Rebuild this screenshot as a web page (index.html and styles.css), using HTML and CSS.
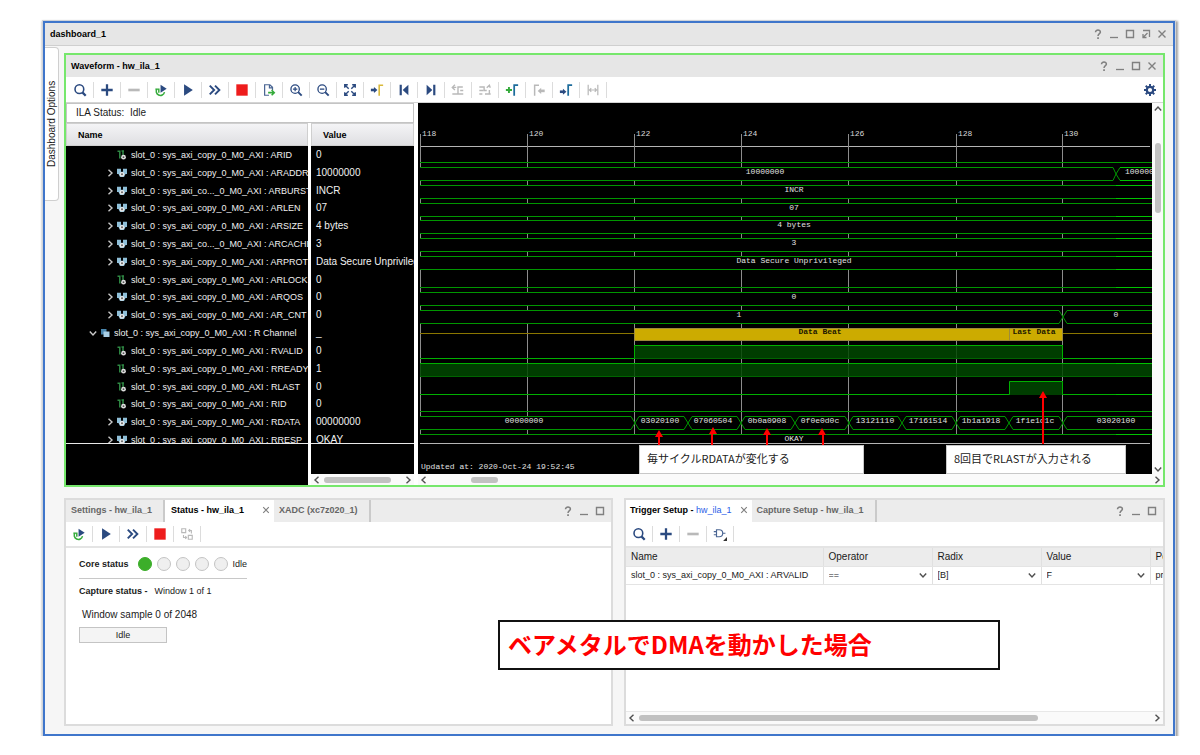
FILE: index.html
```html
<!DOCTYPE html>
<html lang="ja">
<head>
    <meta charset="UTF-8">
    <meta name="viewport" content="width=device-width, initial-scale=1.0">
    <title>dashboard_1</title>
    <link rel="stylesheet" href="styles.css">
</head>
<body>

<!-- shared icons -->
<svg class="sprite" aria-hidden="true">
    <symbol id="search" viewBox="0 0 16 16"><circle cx="7.3" cy="7" r="5" fill="none" stroke="#2b4a80" stroke-width="1.8"/><path d="M11 11l3.5 3.5" stroke="#2b4a80" stroke-width="2.6"/></symbol>
    <symbol id="plus" viewBox="0 0 16 16"><path d="M8 1.5v13M1.5 8h13" stroke="#2b4a80" stroke-width="2.6"/></symbol>
    <symbol id="minus" viewBox="0 0 16 16"><path d="M1.500 8h13" stroke="#b9b9b9" stroke-width="3"/></symbol>
    <symbol id="rerun" viewBox="0 0 16 16"><path d="M3.500 6.500A4.800 4.800 0 1 0 12 10.500M1.500 7h4v4" fill="none" stroke="#35ab3b" stroke-width="1.700"/><path d="M7.500 2l7 4.500-7 4.500z" fill="#2b4a80"/></symbol>
    <symbol id="play" viewBox="0 0 16 16"><path d="M3.500 1.500l10 6.500-10 6.500z" fill="#2b4a80"/></symbol>
    <symbol id="fast" viewBox="0 0 16 16"><path d="M2 3L7 8 2 13M8 3L13 8 8 13" fill="none" stroke="#2b4a80" stroke-width="2.200"/></symbol>
    <symbol id="stop" viewBox="0 0 16 16"><path d="M1.500 1.500h13v13h-13z" fill="#ee1c1c"/></symbol>
    <symbol id="export" viewBox="0 0 16 16"><path d="M8 14H3V2h6l3 3v3M8.500 2v3.500H12" fill="none" stroke="#4a6593" stroke-width="1.400"/><path d="M7 11h6.500M11 8l3 3-3 3" fill="none" stroke="#35ab3b" stroke-width="1.800"/></symbol>
    <symbol id="zoomin" viewBox="0 0 16 16"><circle cx="7" cy="7" r="4.800" fill="none" stroke="#2b4a80" stroke-width="1.500"/><path d="M4.500 7h5M7 4.500v5" stroke="#2b4a80" stroke-width="1.400"/><path d="M10.500 10.500l4 4" stroke="#2b4a80" stroke-width="2.200"/></symbol>
    <symbol id="zoomout" viewBox="0 0 16 16"><circle cx="7" cy="7" r="4.800" fill="none" stroke="#2b4a80" stroke-width="1.500"/><path d="M4.500 7h5" stroke="#2b4a80" stroke-width="1.500"/><path d="M10.500 10.500l4 4" stroke="#2b4a80" stroke-width="2.200"/></symbol>
    <symbol id="fit" viewBox="0 0 16 16"><path d="M2 5.500V2h3.500M10.500 2H14v3.500M14 10.500V14h-3.500M5.500 14H2v-3.500M2.500 2.500l4 4M13.500 2.500l-4 4M13.500 13.500l-4-4M2.500 13.500l4-4" fill="none" stroke="#2b4a80" stroke-width="1.600" stroke-dasharray="none"/></symbol>
    <symbol id="trig" viewBox="0 0 16 16"><path d="M1 8h4" stroke="#2b4a80" stroke-width="3"/><path d="M4.500 4.500L8.500 8l-4 3.500z" fill="#2b4a80"/><path d="M10.500 14.500V2.500H15" fill="none" stroke="#d9b93b" stroke-width="1.800"/></symbol>
    <symbol id="first" viewBox="0 0 16 16"><path d="M3 2h2.500v12H3zM13 2v12L6.500 8z" fill="#2b4a80"/></symbol>
    <symbol id="last" viewBox="0 0 16 16"><path d="M13 2h-2.500v12H13zM3 2v12l6.500-6z" fill="#2b4a80"/></symbol>
    <symbol id="prevedge" viewBox="0 0 16 16"><path d="M1.500 12.500H8V4.500h5.500M14 8.500h-3.500M14 12.500H8M4.500 2l-3 3 3 3M1.500 5H6" fill="none" stroke="#b9b9b9" stroke-width="1.600"/></symbol>
    <symbol id="nextedge" viewBox="0 0 16 16"><path d="M1.500 4.500H7v4h3M8.500 12.500h6M8 12.500h5V8M1.500 8.500H6M1.500 12.500H5M10 5.500l3-3 1 3" fill="none" stroke="#b9b9b9" stroke-width="1.600"/></symbol>
    <symbol id="addmark" viewBox="0 0 16 16"><path d="M4.500 4.500v7M1 8h7" stroke="#35ab3b" stroke-width="2.200"/><path d="M10.500 14.500V2.500H15" fill="none" stroke="#1d6c9c" stroke-width="2"/></symbol>
    <symbol id="prevmark" viewBox="0 0 16 16"><path d="M8 2.500H3v12" fill="none" stroke="#b9b9b9" stroke-width="1.700"/><path d="M10 9h4.500" stroke="#b9b9b9" stroke-width="3"/><path d="M10.500 5.500v7L6.500 9z" fill="#b9b9b9"/></symbol>
    <symbol id="nextmark" viewBox="0 0 16 16"><path d="M1 10h4" stroke="#2b4a80" stroke-width="3"/><path d="M4.500 6.500l4 3.500-4 3.500z" fill="#2b4a80"/><path d="M10.500 14.500V2.500H15" fill="none" stroke="#1d6c9c" stroke-width="2"/></symbol>
    <symbol id="swap" viewBox="0 0 16 16"><path d="M2.500 2v12M13.500 2v12M4 8h8M6 6L4 8l2 2M10 6l2 2-2 2" fill="none" stroke="#b9b9b9" stroke-width="1.400"/></symbol>
    <symbol id="gear" viewBox="0 0 16 16"><circle cx="8" cy="8" r="4.300" fill="none" stroke="#2b4a80" stroke-width="3"/><path d="M8 0v4M8 12v4M0 8h4M12 8h4M2.300 2.300l2.500 2.500M11.200 11.200l2.500 2.500M13.700 2.300l-2.500 2.500M4.800 11.200l-2.500 2.500" stroke="#2b4a80" stroke-width="2.600"/></symbol>
    <symbol id="blocks" viewBox="0 0 16 16"><path d="M2 2h4.500v4.500H2zM9.500 9.500H14V14H9.500zM10 4h3v3.500M11.500 2.500L10 4l1.500 1.500M7.500 12H4V9M6 10.500L7.500 12 6 13.500" fill="none" stroke="#b9b9b9" stroke-width="1.300"/></symbol>
    <symbol id="gate" viewBox="0 0 18 18"><path d="M4.500 3.500H8a4.500 4.500 0 0 1 0 9H4.500zM1 6h3.500M1 10h3.500M13 8h3" fill="none" stroke="#4a6593" stroke-width="1.500"/><path d="M18 13v5h-5z" fill="#333"/></symbol>
    <symbol id="help" viewBox="0 0 10 10"><path d="M2.500 3.200C2.500.2 7.600.4 7.400 3.100 7.300 4.700 5 4.600 5 7" fill="none" stroke="#808080" stroke-width="1.500"/><path d="M4.200 8.200h1.700v1.700H4.200z" fill="#808080"/></symbol>
    <symbol id="min" viewBox="0 0 10 10"><path d="M1 8.500h8" stroke="#808080" stroke-width="1.300"/></symbol>
    <symbol id="max" viewBox="0 0 10 10"><path d="M1.500 1.500h7v7h-7z" fill="none" stroke="#808080" stroke-width="1.400"/></symbol>
    <symbol id="float" viewBox="0 0 10 10"><path d="M2 1.500h6.500V8M6.500 4L2.500 8M2 5v3.500h3.500" fill="none" stroke="#808080" stroke-width="1.300"/></symbol>
    <symbol id="close" viewBox="0 0 10 10"><path d="M1.500 1.500l7 7M8.500 1.500l-7 7" stroke="#808080" stroke-width="1.400"/></symbol>
    <symbol id="right" viewBox="0 0 8 8"><path d="M2.500 .8L6 4 2.500 7.200" fill="none" stroke="currentColor" stroke-width="1.400"/></symbol>
    <symbol id="left" viewBox="0 0 8 8"><path d="M5.500 .8L2 4l3.500 3.200" fill="none" stroke="currentColor" stroke-width="1.400"/></symbol>
    <symbol id="down" viewBox="0 0 8 8"><path d="M.8 2.500L4 6l3.200-3.500" fill="none" stroke="currentColor" stroke-width="1.400"/></symbol>
    <symbol id="up" viewBox="0 0 8 8"><path d="M.8 5.500L4 2l3.200 3.500" fill="none" stroke="currentColor" stroke-width="1.400"/></symbol>
    <symbol id="bus" viewBox="0 0 10 10"><path d="M0 .8h4v3H6v-3h4V6H8.500L7 9H3L1.500 6H0z" fill="#8fbfd8"/><circle cx="5" cy="6.300" r="2.400" fill="#e8e8e8"/><circle cx="5" cy="6.300" r="1" fill="#666"/></symbol>
    <symbol id="wire" viewBox="0 0 10 10"><path d="M.5 1.200h2.300V8.500M6 .5V5M4.500 1H7" fill="none" stroke="#2f8a44" stroke-width="1.500"/><circle cx="6.500" cy="7.200" r="2.400" fill="#ddd"/><circle cx="6.500" cy="7.200" r=".9" fill="#555"/></symbol>
    <symbol id="group" viewBox="0 0 10 10"><path d="M1 1h5.500v5.500H1z" fill="#4a86ad"/><path d="M3.500 3.500H9.500V9h-6z" fill="#a9cfe6"/></symbol>
</svg>

<main class="window">
    <header class="titlebar">
        <h1>dashboard_1</h1>
        <div class="winbtns">
            <button aria-label="Help"><svg><use href="#help"/></svg></button>
            <button aria-label="Minimize"><svg><use href="#min"/></svg></button>
            <button aria-label="Maximize"><svg><use href="#max"/></svg></button>
            <button aria-label="Float"><svg><use href="#float"/></svg></button>
            <button aria-label="Close"><svg><use href="#close"/></svg></button>
        </div>
    </header>

    <div class="workspace">
        <button class="side-tab">Dashboard Options</button>

        <div class="panels">
            <section class="panel waveform">
                <header class="titlebar">
                    <h2>Waveform - hw_ila_1</h2>
                    <div class="winbtns">
                        <button aria-label="Help"><svg><use href="#help"/></svg></button>
                        <button aria-label="Minimize"><svg><use href="#min"/></svg></button>
                        <button aria-label="Maximize"><svg><use href="#max"/></svg></button>
                        <button aria-label="Close"><svg><use href="#close"/></svg></button>
                    </div>
                </header>
                <div class="toolbar">
                    <button aria-label="Search"><svg><use href="#search"/></svg></button>
                    <button aria-label="Add"><svg><use href="#plus"/></svg></button>
                    <button aria-label="Remove"><svg><use href="#minus"/></svg></button>
                    <button aria-label="Auto re-trigger"><svg><use href="#rerun"/></svg></button>
                    <button aria-label="Run trigger"><svg><use href="#play"/></svg></button>
                    <button aria-label="Run immediate"><svg><use href="#fast"/></svg></button>
                    <button aria-label="Stop"><svg><use href="#stop"/></svg></button>
                    <button aria-label="Export"><svg><use href="#export"/></svg></button>
                    <button aria-label="Zoom in"><svg><use href="#zoomin"/></svg></button>
                    <button aria-label="Zoom out"><svg><use href="#zoomout"/></svg></button>
                    <button aria-label="Zoom fit"><svg><use href="#fit"/></svg></button>
                    <button aria-label="Go to trigger"><svg><use href="#trig"/></svg></button>
                    <button aria-label="First"><svg><use href="#first"/></svg></button>
                    <button aria-label="Last"><svg><use href="#last"/></svg></button>
                    <button aria-label="Previous transition"><svg><use href="#prevedge"/></svg></button>
                    <button aria-label="Next transition"><svg><use href="#nextedge"/></svg></button>
                    <button aria-label="Add marker"><svg><use href="#addmark"/></svg></button>
                    <button aria-label="Previous marker"><svg><use href="#prevmark"/></svg></button>
                    <button aria-label="Next marker"><svg><use href="#nextmark"/></svg></button>
                    <button aria-label="Swap cursors"><svg><use href="#swap"/></svg></button>
                    <button class="settings" aria-label="Settings"><svg><use href="#gear"/></svg></button>
                </div>

                <div class="wave-main">
                    <div class="signals">
                        <div class="ila-status">ILA Status:&nbsp; Idle</div>
                        <div class="columns">
                            <div class="column">
                                <div class="col-head">Name</div>
                                <div class="clip"><ul class="rows names">
                                    <li><i></i><svg><use href="#wire"/></svg>slot_0 : sys_axi_copy_0_M0_AXI : ARID</li>
                                    <li><i><svg><use href="#right"/></svg></i><svg><use href="#bus"/></svg>slot_0 : sys_axi_copy_0_M0_AXI : ARADDR</li>
                                    <li><i><svg><use href="#right"/></svg></i><svg><use href="#bus"/></svg>slot_0 : sys_axi_co..._0_M0_AXI : ARBURST</li>
                                    <li><i><svg><use href="#right"/></svg></i><svg><use href="#bus"/></svg>slot_0 : sys_axi_copy_0_M0_AXI : ARLEN</li>
                                    <li><i><svg><use href="#right"/></svg></i><svg><use href="#bus"/></svg>slot_0 : sys_axi_copy_0_M0_AXI : ARSIZE</li>
                                    <li><i><svg><use href="#right"/></svg></i><svg><use href="#bus"/></svg>slot_0 : sys_axi_co..._0_M0_AXI : ARCACHE</li>
                                    <li><i><svg><use href="#right"/></svg></i><svg><use href="#bus"/></svg>slot_0 : sys_axi_copy_0_M0_AXI : ARPROT</li>
                                    <li><i></i><svg><use href="#wire"/></svg>slot_0 : sys_axi_copy_0_M0_AXI : ARLOCK</li>
                                    <li><i><svg><use href="#right"/></svg></i><svg><use href="#bus"/></svg>slot_0 : sys_axi_copy_0_M0_AXI : ARQOS</li>
                                    <li><i><svg><use href="#right"/></svg></i><svg><use href="#bus"/></svg>slot_0 : sys_axi_copy_0_M0_AXI : AR_CNT</li>
                                    <li class="group"><i><svg><use href="#down"/></svg></i><svg><use href="#group"/></svg>slot_0 : sys_axi_copy_0_M0_AXI : R Channel</li>
                                    <li><i></i><svg><use href="#wire"/></svg>slot_0 : sys_axi_copy_0_M0_AXI : RVALID</li>
                                    <li><i></i><svg><use href="#wire"/></svg>slot_0 : sys_axi_copy_0_M0_AXI : RREADY</li>
                                    <li><i></i><svg><use href="#wire"/></svg>slot_0 : sys_axi_copy_0_M0_AXI : RLAST</li>
                                    <li><i></i><svg><use href="#wire"/></svg>slot_0 : sys_axi_copy_0_M0_AXI : RID</li>
                                    <li><i><svg><use href="#right"/></svg></i><svg><use href="#bus"/></svg>slot_0 : sys_axi_copy_0_M0_AXI : RDATA</li>
                                    <li><i><svg><use href="#right"/></svg></i><svg><use href="#bus"/></svg>slot_0 : sys_axi_copy_0_M0_AXI : RRESP</li>
                                </ul></div>
                                <div class="below"></div>
                            </div>
                            <div class="column">
                                <div class="col-head">Value</div>
                                <div class="clip"><ul class="rows values">
                                    <li>0</li><li>10000000</li><li>INCR</li><li>07</li><li>4 bytes</li><li>3</li>
                                    <li>Data Secure Unprivileg</li><li>0</li><li>0</li><li>0</li><li>_</li>
                                    <li>0</li><li>1</li><li>0</li><li>0</li><li>00000000</li><li>OKAY</li>
                                </ul></div>
                                <div class="below"></div>
                                <div class="hscroll"><svg><use href="#left"/></svg><span class="track"><b class="thumb value-thumb"></b></span><svg><use href="#right"/></svg></div>
                            </div>
                        </div>
                    </div>

                    <div class="viewer">
                        <div class="view-row">
                            <div class="wave-view">
                                <svg class="wave" role="img" aria-label="Waveform">
                                    <!-- time ruler and grid -->
                                    <path class="ruler" d="M2 43.500H732"/>
                                    <path class="grid" d="M2.500 31V331M109.500 31V331M216.500 31V331M323.500 31V331M430.500 31V331M538.500 31V331M644.500 31V331"/>
                                    <g class="tick">
                                        <text x="4" y="33">118</text><text x="111" y="33">120</text><text x="218" y="33">122</text>
                                        <text x="325" y="33">124</text><text x="432" y="33">126</text><text x="540" y="33">128</text><text x="646" y="33">130</text>
                                    </g>
                                    <!-- AR channel -->
                                    <g class="busline">
                                        <path d="M2 59.500H2000"/>
                                        <path class="body" d="M2 64.500H695L698 71 695 77.500H2M2000 64.500H702L698 71 702 77.500H2000"/>
                                        <path class="body" d="M2 82.500H2000V95.500H2"/>
                                        <path class="body" d="M2 100.500H2000V113.500H2"/>
                                        <path class="body" d="M2 117.500H2000V130.500H2"/>
                                        <path class="body" d="M2 135.500H2000V148.500H2"/>
                                        <path class="body" d="M2 153.500H2000V166.500H2"/>
                                        <path d="M2 184.500H2000"/>
                                        <path class="body" d="M2 189.500H2000V202.500H2"/>
                                        <path class="body" d="M2 207.500H641L645 214 641 220.500H2M2000 207.500H649L645 214 649 220.500H2000"/>
                                    </g>
                                    <!-- R channel -->
                                    <path class="idle" d="M2 230.500H216M645 230.500H2000"/>
                                    <path class="beat" d="M216.500 225.500H591.500V237.500H216.500zM591.500 225.500H644.500V237.500H591.500z"/>
                                    <path class="high" d="M216 242H645V256H216zM2 260H2000V274H2zM591 278H645V292H591z"/>
                                    <path class="lowline" d="M2 273.500H2000M216 255.500H645"/>
                                    <g class="busline">
                                        <path class="edge" d="M2 255.500H216.500V242.500H644.500V255.500H2000M2 260.500H2000M2 291.500H591.500V278.500H644.500V291.500H2000"/>
                                        <path d="M2 308.500H2000"/>
                                        <path class="body" d="M2 313.500H213L217 320 213 326.500H2"/>
                                        <path class="body" d="M221 313.500H266L270 320 266 326.500H221L217 320zM274 313.500H319L323 320 319 326.500H274L270 320zM327 313.500H373L377 320 373 326.500H327L323 320zM381 313.500H427L431 320 427 326.500H381L377 320zM435 313.500H480L484 320 480 326.500H435L431 320zM488 313.500H534L538 320 534 326.500H488L484 320zM542 313.500H587L591 320 587 326.500H542L538 320zM595 313.500H641L645 320 641 326.500H595L591 320z"/>
                                        <path class="body" d="M2000 313.500H649L645 320 649 326.500H2000"/>
                                        <path d="M2 331.500H2000"/>
                                        <path class="bright" d="M702 64.500H2000M702 77.500H2000M698 82.500H2000M698 95.500H2000M698 113.500H2000M698 135.500H2000M698 153.500H2000M698 166.500H2000M698 184.500H2000M698 260.500H2000M698 291.500H2000M698 331.500H2000"/>
                                    </g>
                                    <path class="ruler" d="M2 340.500H732"/>
                                    <g class="label">
                                        <text x="347" y="71">10000000</text><text class="start" x="707" y="71">100000</text>
                                        <text x="376" y="89">INCR</text><text x="376" y="107">07</text><text x="376" y="124">4 bytes</text>
                                        <text x="376" y="142">3</text><text x="376" y="160">Data Secure Unprivileged</text><text x="376" y="196">0</text>
                                        <text x="321" y="214">1</text><text x="698" y="214">0</text>
                                        <text class="dark" x="402" y="231">Data Beat</text><text class="dark" x="616" y="231">Last Data</text>
                                        <text x="106" y="320">00000000</text><text x="242" y="320">03020100</text><text x="295" y="320">07060504</text>
                                        <text x="349" y="320">0b0a0908</text><text x="402" y="320">0f0e0d0c</text><text x="457" y="320">13121110</text>
                                        <text x="510" y="320">17161514</text><text x="563" y="320">1b1a1918</text><text x="617" y="320">1f1e1d1c</text>
                                        <text x="698" y="320">03020100</text><text x="376" y="338">OKAY</text>
                                        <text class="start" x="3" y="366">Updated at: 2020-Oct-24 19:52:45</text>
                                    </g>
                                    <!-- arrows from the notes -->
                                    <path class="arrow" d="M241 343V332M294 343V330M349 343V331M405 343V331M625 341V293"/>
                                    <path class="arrowhead" d="M241 327l4 7h-8zM295 324l4 7h-8zM349 325l4 7h-8zM404 325l4 7h-8zM625 288l4 7h-8z"/>
                                </svg>
                                <p class="note note-data">毎サイクルRDATAが変化する</p>
                                <p class="note note-last">8回目でRLASTが入力される</p>
                            </div>
                            <div class="vscroll"><svg><use href="#up"/></svg><span class="track"><b class="thumb"></b></span><svg><use href="#down"/></svg></div>
                        </div>
                        <div class="hscroll"><svg><use href="#left"/></svg><span class="track"><b class="thumb wave-thumb"></b></span><svg><use href="#right"/></svg></div>
                    </div>
                </div>
            </section>

            <div class="lower">
                <section class="panel status">
                    <header class="tabs">
                        <button class="tab">Settings - hw_ila_1</button>
                        <button class="tab active">Status - hw_ila_1<svg><use href="#close"/></svg></button>
                        <button class="tab">XADC (xc7z020_1)</button>
                        <div class="winbtns">
                            <button aria-label="Help"><svg><use href="#help"/></svg></button>
                            <button aria-label="Minimize"><svg><use href="#min"/></svg></button>
                            <button aria-label="Maximize"><svg><use href="#max"/></svg></button>
                        </div>
                    </header>
                    <div class="toolbar">
                        <button aria-label="Auto re-trigger"><svg><use href="#rerun"/></svg></button>
                        <button aria-label="Run trigger"><svg><use href="#play"/></svg></button>
                        <button aria-label="Run immediate"><svg><use href="#fast"/></svg></button>
                        <button aria-label="Stop"><svg><use href="#stop"/></svg></button>
                        <button aria-label="Toggle"><svg><use href="#blocks"/></svg></button>
                    </div>
                    <div class="status-body">
                        <div class="core"><strong>Core status</strong>
                            <span class="lamps"><i class="on"></i><i></i><i></i><i></i><i></i></span>Idle</div>
                        <p class="capture"><strong>Capture status -</strong>Window 1 of 1</p>
                        <p class="sample">Window sample 0 of 2048</p>
                        <div class="progress">Idle</div>
                    </div>
                </section>

                <section class="panel trigger">
                    <header class="tabs">
                        <button class="tab active"><span>Trigger Setup - <span class="core-name">hw_ila_1</span></span><svg><use href="#close"/></svg></button>
                        <button class="tab">Capture Setup - hw_ila_1</button>
                        <div class="winbtns">
                            <button aria-label="Help"><svg><use href="#help"/></svg></button>
                            <button aria-label="Minimize"><svg><use href="#min"/></svg></button>
                            <button aria-label="Maximize"><svg><use href="#max"/></svg></button>
                        </div>
                    </header>
                    <div class="toolbar">
                        <button aria-label="Search"><svg><use href="#search"/></svg></button>
                        <button aria-label="Add"><svg><use href="#plus"/></svg></button>
                        <button aria-label="Remove"><svg><use href="#minus"/></svg></button>
                        <button aria-label="Trigger condition"><svg><use href="#gate"/></svg></button>
                    </div>
                    <div class="table-wrap">
                        <table>
                            <thead><tr><th class="c-name">Name</th><th>Operator</th><th>Radix</th><th>Value</th><th>Port</th></tr></thead>
                            <tbody><tr>
                                <td class="c-name">slot_0 : sys_axi_copy_0_M0_AXI : ARVALID</td>
                                <td><div class="pick"><select aria-label="Operator"><option>==</option><option>!=</option></select><svg><use href="#down"/></svg></div></td>
                                <td><div class="pick"><select aria-label="Radix"><option>[B]</option><option>[H]</option></select><svg><use href="#down"/></svg></div></td>
                                <td><div class="pick"><select aria-label="Value"><option>F</option><option>R</option></select><svg><use href="#down"/></svg></div></td>
                                <td>probe</td>
                            </tr></tbody>
                        </table>
                    </div>
                    <div class="hscroll"><svg><use href="#left"/></svg><span class="track"><b class="thumb table-thumb"></b></span><svg><use href="#right"/></svg></div>
                </section>
            </div>
        </div>
    </div>

    <p class="caption">ベアメタルでDMAを動かした場合</p>
</main>

</body>
</html>
```

FILE: styles.css
```css
* {
    box-sizing: border-box;
}

body {
    margin: 0;
    background: #fff;
    color: #1a1a1a;
    font-family: "Liberation Sans", Arial, "Noto Sans CJK JP", sans-serif;
    font-size: 9px;
    line-height: 12px;
}

h1, h2, p, ul {
    margin: 0;
    padding: 0;
}

h1, h2 {
    font-size: 9px;
    color: #000;
}

button {
    padding: 0;
    border: 0;
    background: none;
    font: inherit;
    color: inherit;
    cursor: pointer;
}

svg {
    display: block;
    flex: none;
}

.sprite {
    position: absolute;
    width: 0;
    height: 0;
}

/* outer window */
.window {
    position: relative;
    display: flex;
    flex-direction: column;
    margin: 21px 25px 0 43px;
    min-height: calc(100vh - 40px);
    border: 2px solid #3f76cb;
    background: #f6f6f6;
    box-shadow: 0 0 0 1px #d0d4da, 1px 2px 2px 2px #a4a4a4;
}

.titlebar {
    display: flex;
    align-items: center;
    justify-content: space-between;
    height: 22px;
    padding: 0 6px 0 5px;
    background: #e6e6e6;
}

.window > .titlebar {
    height: 23px;
    border-bottom: 1px solid #cfcfcf;
}

.winbtns {
    display: flex;
    gap: 6px;
}

.winbtns svg {
    width: 10px;
    height: 10px;
}

.workspace {
    flex: 1;
    display: flex;
    padding: 0 8px 8px 0;
}

/* rotated half a turn, so the rounded side ends up on the right */
.side-tab {
    align-self: flex-start;
    display: flex;
    align-items: center;
    justify-content: center;
    width: 14px;
    height: 154px;
    margin: 1px 5px 0 0;
    border: 1px solid #cfcfcf;
    border-right: 0;
    border-radius: 4px 0 0 4px;
    background: #fff;
    font-size: 10px;
    writing-mode: vertical-rl;
    rotate: 180deg;
}

.panels {
    flex: 1;
    min-width: 0;
    display: flex;
    flex-direction: column;
    gap: 11px;
    padding-top: 7px;
}

.panel {
    min-width: 0;
    display: flex;
    flex-direction: column;
    border: 2px solid #dcdcdc;
    background: #fff;
}

.waveform {
    border-color: #76e76c;
}

.toolbar {
    display: flex;
    align-items: center;
    height: 26px;
    border-bottom: 1px solid #d4d4d4;
}

.waveform .toolbar {
    padding-left: 1px;
}

.toolbar button {
    display: flex;
    align-items: center;
    justify-content: center;
    width: 27px;
    height: 16px;
    border-right: 1px solid #dcdcdc;
}

.toolbar svg {
    width: 14px;
    height: 14px;
}

.toolbar .settings {
    margin-left: auto;
    border: 0;
}

.settings svg {
    width: 12px;
    height: 12px;
}

/* signal list */
.wave-main {
    display: flex;
    gap: 4px;
}

.signals {
    width: 348px;
    display: flex;
    flex-direction: column;
}

.ila-status {
    height: 20px;
    padding: 3px 9px;
    border: 1px solid #c4c4c4;
    font-size: 10px;
}

.columns {
    flex: 1;
    display: grid;
    grid-template-columns: 242px 103px;
    gap: 3px;
}

.column {
    min-width: 0;
    display: flex;
    flex-direction: column;
}

.col-head {
    height: 23px;
    padding: 5px 11px;
    border: 1px solid #cfcfcf;
    background: linear-gradient(#f4f4f6, #dfdfe2);
    color: #000;
    font-weight: bold;
}

.clip {
    height: 297px;
    overflow: hidden;
    background: #000;
}

/* the last row is cut by the divider below */
.rows {
    display: grid;
    grid-auto-rows: 1fr;
    height: 303px;
    color: #f0f0f0;
    list-style: none;
    white-space: nowrap;
}

.rows li {
    display: flex;
    align-items: center;
}

.names li {
    gap: 4px;
    padding-left: 40px;
}

.names .group {
    padding-left: 23px;
}

.names svg {
    width: 10px;
    height: 10px;
}

.names i {
    width: 7px;
}

.names i svg {
    width: 8px;
    height: 8px;
    color: #c8c8c8;
}

.values {
    padding-left: 5px;
    font-size: 10px;
}

.below {
    flex: 1;
    border-top: 1px solid #e8e8e8;
    background: #000;
}

/* waveform area */
.viewer {
    flex: 1;
    min-width: 0;
}

.view-row {
    display: flex;
}

.wave-view {
    position: relative;
    flex: 1;
    min-width: 0;
    height: 371px;
    overflow: hidden;
    background: #000;
}

.wave {
    width: 100%;
    height: 100%;
    font: 8px "Liberation Mono", monospace;
}

.wave path {
    fill: none;
}

.wave .ruler {
    stroke: #b4b4b4;
}

.wave .grid {
    stroke: #8c8c8c;
}

.tick text {
    fill: #d8d8d8;
}

.label text {
    fill: #e0e0e0;
    text-anchor: middle;
}

.label .start {
    text-anchor: start;
}

.label .dark {
    fill: #201800;
    font-weight: bold;
}

.busline path {
    stroke: #009600;
}

.busline .body {
    fill: #000;
}

.busline .edge {
    stroke: #00b000;
}

.busline .bright {
    stroke: #00c400;
}

.wave .idle {
    stroke: #8a7600;
}

.wave .beat {
    fill: #ccab00;
    stroke: #9c8a3c;
}

.wave .high {
    fill: #004800;
    fill-opacity: 0.85;
}

.wave .lowline {
    stroke: #006400;
}

.wave .arrow {
    stroke: #f00;
    stroke-width: 2;
}

.wave .arrowhead {
    fill: #f00;
}

.note {
    position: absolute;
    top: 342px;
    height: 29px;
    padding: 4px 7px;
    border: 1px solid #c8c8c8;
    background: #fff;
    color: #222;
    font: 11px/16px "Noto Sans CJK JP", sans-serif;
}

.note-data {
    left: 221px;
    width: 225px;
}

.note-last {
    left: 528px;
    width: 180px;
}

/* scrollbars */
.hscroll, .vscroll {
    display: flex;
    align-items: center;
    background: #fafafa;
    color: #505050;
}

.hscroll {
    height: 11px;
    padding: 0 2px;
}

.vscroll {
    flex-direction: column;
    width: 11px;
    padding: 2px 0 1px;
}

.hscroll svg, .vscroll svg {
    width: 8px;
    height: 8px;
}

.track {
    flex: 1;
    padding: 0 3px;
}

.thumb {
    display: block;
    height: 6px;
    border-radius: 3px;
    background: #c1c1c1;
}

.vscroll .track {
    padding: 30px 0 0;
}

.vscroll .thumb {
    width: 6px;
    height: 70px;
}

.value-thumb {
    width: 67px;
}

.wave-thumb {
    width: 27px;
    margin-left: 40px;
}

.table-thumb {
    width: 78%;
}

/* lower panels */
.lower {
    flex: 1;
    display: grid;
    grid-template-columns: 549fr 541fr;
    gap: 11px;
}

.tabs {
    display: flex;
    height: 22px;
    background: #ececec;
}

.tab {
    display: flex;
    align-items: center;
    gap: 8px;
    padding: 0 11px 2px 5px;
    border-right: 2px solid #cacaca;
    color: #666;
    font-weight: bold;
    white-space: pre;
}

.tab.active {
    padding: 0 4px 2px;
    border: 0;
    background: #fff;
    color: #000;
}

.status .tab.active {
    gap: 18px;
    padding-left: 6px;
}

.tab svg {
    width: 8px;
    height: 8px;
}

.core-name {
    color: #2a5de8;
    font-weight: normal;
}

.tabs .winbtns {
    margin-left: auto;
    padding: 6px 6px 0 0;
    align-items: flex-start;
}

.lower .toolbar {
    border-bottom: 2px solid #e4e4e4;
}

.status-body {
    padding: 9px 13px;
}

.core {
    display: inline-flex;
    align-items: center;
    height: 22px;
    padding-bottom: 7px;
    border-bottom: 1px solid #c8c8c8;
}

.lamps {
    display: flex;
    gap: 5px;
    padding: 0 5px 0 9px;
}

.lamps i {
    width: 14px;
    height: 14px;
    border: 1px solid #c4c4c4;
    border-radius: 50%;
    background: #efefef;
}

.lamps .on {
    border-color: #3cae2a;
    background: #3cae2a;
}

.capture {
    display: flex;
    gap: 7px;
    padding-top: 6px;
}

.sample {
    padding: 12px 3px 6px;
    font-size: 10px;
}

.progress {
    width: 88px;
    height: 16px;
    border: 1px solid #c4c4c4;
    background: #f4f4f4;
    line-height: 14px;
    text-align: center;
}

.table-wrap {
    flex: 1;
    overflow: hidden;
}

table {
    width: 633px;
    table-layout: fixed;
    border-collapse: collapse;
}

th, td {
    width: 109px;
    height: 18px;
    padding: 0 5px;
    border-right: 1px solid #e0e0e0;
    border-bottom: 1px solid #e4e4e4;
    text-align: left;
    white-space: nowrap;
}

th {
    background: #ececec;
    font-size: 10px;
    font-weight: normal;
}

.c-name {
    width: 197px;
}

.pick {
    display: flex;
    align-items: center;
    color: #505050;
}

.pick svg {
    width: 8px;
    height: 8px;
}

select {
    flex: 1;
    padding: 0;
    border: 0;
    background: none;
    color: #1a1a1a;
    font: inherit;
    appearance: none;
}

.trigger .hscroll {
    height: 13px;
    border-top: 1px solid #e8e8e8;
}

/* caption over the two lower panels */
.caption {
    position: absolute;
    top: 597px;
    left: 453px;
    width: 502px;
    height: 50px;
    padding: 4px 8px;
    border: 2px solid #111;
    background: #fff;
    color: #f00;
    font: bold 24px/36px "Noto Sans CJK JP", sans-serif;
}
```
